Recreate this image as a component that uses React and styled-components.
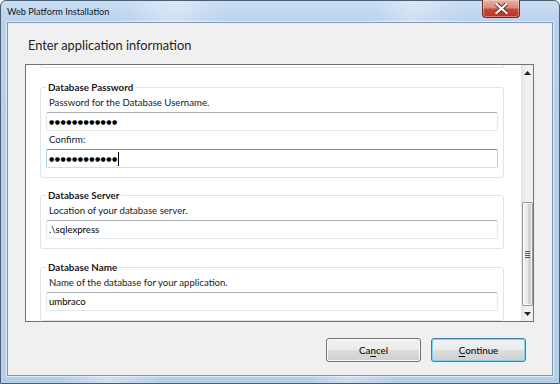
import React from 'react';
import styled, { createGlobalStyle } from 'styled-components';

const GlobalStyle = createGlobalStyle`
  html, body {
    margin: 0;
    padding: 0;
    overflow: hidden;
    background: #ffffff;
  }
  * {
    box-sizing: border-box;
  }
`;

const UI_FONT = `"Segoe UI", Lato, "Liberation Sans", sans-serif`;

const Window = styled.div`
  width: 560px;
  height: 384px;
  display: flex;
  flex-direction: column;
  border: 1px solid #4b5d72;
  border-radius: 6px 6px 0 0;
  background:
    linear-gradient(100deg, rgba(255,255,255,0) 20%, rgba(255,255,255,0.35) 28%, rgba(255,255,255,0) 36%, rgba(255,255,255,0) 60%, rgba(255,255,255,0.3) 66%, rgba(255,255,255,0) 74%),
    linear-gradient(to bottom, #c9def3 0px, #b9d2ec 22px, #b6cfe9 100%);
  font-family: ${UI_FONT};
  color: #000;
`;

const TitleBar = styled.div`
  height: 21px;
  display: flex;
  align-items: flex-start;
  justify-content: space-between;
  padding-left: 6px;
  padding-right: 39px;
`;

const Title = styled.div`
  font-size: 9.2px;
  line-height: 12px;
  margin-top: 5px;
  color: #101820;
`;

const CloseButton = styled.div`
  width: 38px;
  height: 18px;
  margin-top: -1px;
  display: flex;
  align-items: center;
  justify-content: center;
  border: 1px solid #6e2a22;
  border-top: none;
  border-radius: 0 0 4px 4px;
  background: linear-gradient(to bottom, #eab1a4 0%, #dc8a7a 45%, #c5493a 55%, #b93223 100%);
  box-shadow: inset 0 0 0 1px rgba(255, 220, 210, 0.45);
`;

const Client = styled.div`
  flex: 1;
  margin: 0 6px 7px 6px;
  display: flex;
  flex-direction: column;
  border: 1px solid #8296b0;
  background: #f0f0f0;
  box-shadow: 0 0 0 1px rgba(255, 255, 255, 0.55);
`;

const Heading = styled.div`
  font-size: 12.8px;
  line-height: 18px;
  margin: 13px 0 0 20px;
  color: #1e1e1e;
`;

const Panel = styled.div`
  width: 509px;
  height: 258px;
  margin: 10px 0 0 17px;
  display: flex;
  border: 1px solid #6f7378;
  background: #ffffff;
`;

const Content = styled.div`
  flex: 1;
  overflow: hidden;
  background: #ffffff;
`;

const GroupTail = styled.div`
  height: 3px;
  margin: 0 17px 0 14px;
  border: 1px solid #dde5ea;
  border-top: none;
  border-radius: 0 0 3px 3px;
`;

const Group = styled.fieldset`
  margin: ${(p) => p.$gap}px 17px 0 14px;
  padding: 0 5px 9px 5px;
  border: 1px solid #dde5ea;
  border-radius: 3px;
  min-width: 0;
`;

const Legend = styled.legend`
  padding: 0 2px;
  font-size: 9.8px;
  line-height: 14px;
  font-weight: 700;
  color: #1a1a1a;
`;

const Label = styled.div`
  padding-left: 3px;
  margin-top: 2px;
  font-size: 9.6px;
  line-height: 14px;
  color: #1a1a1a;
`;

const Field = styled.div`
  height: 19px;
  margin-top: 2px;
  display: flex;
  align-items: center;
  padding-left: 2px;
  border: 1px solid;
  border-color: ${(p) =>
    p.$focused ? '#5d95c6 #b0d2ea #c3e1f2 #b0d2ea' : '#abadb3 #e2e3ea #e3e9ef #e2e3ea'};
  border-radius: 2px;
  background: #ffffff;
  font-size: 9.6px;
  color: #000;
`;

const Dots = styled.span`
  font-family: "DejaVu Sans", sans-serif;
  font-size: 6px;
  letter-spacing: 0.5px;
  line-height: 1;
  color: #000;
`;

const Caret = styled.span`
  width: 1px;
  height: 14px;
  background: #000;
`;

const ScrollBar = styled.div`
  width: 12px;
  display: flex;
  flex-direction: column;
  background: linear-gradient(to right, #e6e6e6, #f2f2f2 40%, #f0f0f0);
  border-left: 1px solid #e4e4e4;
`;

const ArrowButton = styled.div`
  height: 15px;
  display: flex;
  align-items: center;
  justify-content: center;
`;

const Track = styled.div`
  flex: 1;
  display: flex;
  flex-direction: column;
  justify-content: flex-end;
`;

const Thumb = styled.div`
  height: 104px;
  display: flex;
  align-items: center;
  justify-content: center;
  border: 1px solid #9a9a9a;
  border-radius: 2px;
  background: linear-gradient(to right, #f4f4f4 0%, #e8e8e8 50%, #d6d6d6 55%, #cfcfcf 100%);
  box-shadow: inset 0 0 0 1px rgba(255, 255, 255, 0.7);
`;

const Grip = styled.div`
  width: 5px;
  height: 7px;
  background: repeating-linear-gradient(to bottom, #5a5a5a 0px, #5a5a5a 1px, transparent 1px, transparent 2px);
`;

const Footer = styled.div`
  display: flex;
  justify-content: flex-end;
  gap: 10px;
  margin-top: 16px;
  padding-right: 26px;
`;

const Button = styled.div`
  width: 95px;
  height: 24px;
  display: flex;
  align-items: center;
  justify-content: center;
  border: 1px solid ${(p) => (p.$default ? '#3c7fb1' : '#707070')};
  border-radius: 3px;
  background: linear-gradient(to bottom, #f2f2f2 0%, #ebebeb 48%, #dddddd 52%, #cfcfcf 100%);
  box-shadow: inset 0 0 0 1px ${(p) => (p.$default ? '#7fd3f5' : '#fcfcfc')};
  font-size: 9.8px;
  color: #000;

  u {
    text-decoration-thickness: 1px;
    text-underline-offset: 2px;
  }
`;

function UpArrow() {
  return (
    <svg width="7" height="4" viewBox="0 0 7 4">
      <path d="M0 4 L3.5 0 L7 4 Z" fill="#222" />
    </svg>
  );
}

function DownArrow() {
  return (
    <svg width="7" height="4" viewBox="0 0 7 4">
      <path d="M0 0 L7 0 L3.5 4 Z" fill="#222" />
    </svg>
  );
}

function CloseGlyph() {
  return (
    <svg width="13" height="11" viewBox="0 0 13 11">
      <path
        d="M1.5 1 L11.5 10 M11.5 1 L1.5 10"
        stroke="#5b231c"
        strokeWidth="4"
        strokeLinecap="square"
      />
      <path
        d="M1.5 1 L11.5 10 M11.5 1 L1.5 10"
        stroke="#ffffff"
        strokeWidth="2.2"
        strokeLinecap="square"
      />
    </svg>
  );
}

const passwordDots = '●●●●●●●●●●●●';

function App() {
  return (
    <>
      <GlobalStyle />
      <Window>
        <TitleBar>
          <Title>Web Platform Installation</Title>
          <CloseButton>
            <CloseGlyph />
          </CloseButton>
        </TitleBar>
        <Client>
          <Heading>Enter application information</Heading>
          <Panel>
            <Content>
              <GroupTail />
              <Group $gap={12}>
                <Legend>Database Password</Legend>
                <Label>Password for the Database Username.</Label>
                <Field>
                  <Dots>{passwordDots}</Dots>
                </Field>
                <Label>Confirm:</Label>
                <Field $focused>
                  <Dots>{passwordDots}</Dots>
                  <Caret />
                </Field>
              </Group>
              <Group $gap={10}>
                <Legend>Database Server</Legend>
                <Label>Location of your database server.</Label>
                <Field>.\sqlexpress</Field>
              </Group>
              <Group $gap={11}>
                <Legend>Database Name</Legend>
                <Label>Name of the database for your application.</Label>
                <Field>umbraco</Field>
              </Group>
            </Content>
            <ScrollBar>
              <ArrowButton>
                <UpArrow />
              </ArrowButton>
              <Track>
                <Thumb>
                  <Grip />
                </Thumb>
              </Track>
              <ArrowButton>
                <DownArrow />
              </ArrowButton>
            </ScrollBar>
          </Panel>
          <Footer>
            <Button>
              <span>
                Ca<u>n</u>cel
              </span>
            </Button>
            <Button $default>
              <span>
                <u>C</u>ontinue
              </span>
            </Button>
          </Footer>
        </Client>
      </Window>
    </>
  );
}

export default App;
